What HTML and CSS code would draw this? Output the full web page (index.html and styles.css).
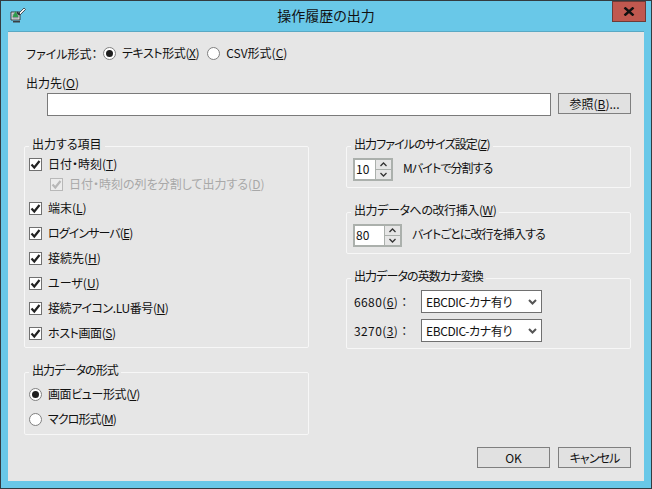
FILE: index.html
```html
<!DOCTYPE html>
<html lang="ja">
<head>
    <meta charset="UTF-8">
    <title>操作履歴の出力</title>
    <link rel="stylesheet" href="styles.css">
</head>
<body>
    <div class="window">
        <div class="titlebar">
            <svg class="app-icon" width="16" height="16" viewBox="0 0 16 16">
                <path d="M1 5h9v8H1z" fill="#e8e8e8" stroke="#3a3f42"/>
                <path d="M2.500 6.500h6v5h-6z" fill="#8d9499"/>
                <path d="M3 14h7v1.500H3z" fill="#3a3f42"/>
                <path d="M5.500 4l3 6H2.500z" fill="#2f9e4c"/>
                <path d="M9 6l5-5 1.500 1.500-5 5z" fill="#f4f4f4" stroke="#2c3135" stroke-width=".8"/>
                <path d="M7.500 4.500l3 3-1.500 1-2.500-2.500z" fill="#2c3135"/>
            </svg>
            <div class="title">操作履歴の出力</div>
            <div class="close">
                <svg width="12" height="9" viewBox="0 0 12 9"><path d="M1.500 .5l9 8M10.500 .5l-9 8" stroke="#111" stroke-width="2.400"/></svg>
            </div>
        </div>

        <div class="client">
            <div class="format-row">
                <span class="format-label">ファイル形式：</span>
                <label class="option"><span class="radio on"></span><span class="snug">テキスト形式(<u>X</u>)</span></label>
                <label class="option"><span class="radio"></span><span>CSV形式(<u>C</u>)</span></label>
            </div>

            <div class="dest-label">出力先(<u>O</u>)</div>
            <div class="dest-row">
                <div class="textbox"></div>
                <button class="btn btn-browse">参照(<u>B</u>)...</button>
            </div>

            <div class="columns">
                <div class="column">
                    <fieldset class="group group-items">
                        <legend>出力する項目</legend>
                        <div class="date-rows">
                            <label class="option">
                                <span class="check"><svg width="11" height="11" viewBox="0 0 11 11"><path d="M1.500 5.500l2.800 3L9.500 2" fill="none" stroke="#222" stroke-width="2.200"/></svg></span>
                                <span>日付・時刻(<u>T</u>)</span>
                            </label>
                            <label class="option sub-option">
                                <span class="check"><svg width="11" height="11" viewBox="0 0 11 11"><path d="M1.500 5.500l2.800 3L9.500 2" fill="none" stroke="#b8b8b8" stroke-width="2.200"/></svg></span>
                                <span>日付・時刻の列を分割して出力する(<u>D</u>)</span>
                            </label>
                        </div>
                        <label class="option">
                            <span class="check"><svg width="11" height="11" viewBox="0 0 11 11"><path d="M1.500 5.500l2.800 3L9.500 2" fill="none" stroke="#222" stroke-width="2.200"/></svg></span>
                            <span>端末(<u>L</u>)</span>
                        </label>
                        <label class="option">
                            <span class="check"><svg width="11" height="11" viewBox="0 0 11 11"><path d="M1.500 5.500l2.800 3L9.500 2" fill="none" stroke="#222" stroke-width="2.200"/></svg></span>
                            <span class="tight">ログインサーバ(<u>E</u>)</span>
                        </label>
                        <label class="option">
                            <span class="check"><svg width="11" height="11" viewBox="0 0 11 11"><path d="M1.500 5.500l2.800 3L9.500 2" fill="none" stroke="#222" stroke-width="2.200"/></svg></span>
                            <span>接続先(<u>H</u>)</span>
                        </label>
                        <label class="option">
                            <span class="check"><svg width="11" height="11" viewBox="0 0 11 11"><path d="M1.500 5.500l2.800 3L9.500 2" fill="none" stroke="#222" stroke-width="2.200"/></svg></span>
                            <span>ユーザ(<u>U</u>)</span>
                        </label>
                        <label class="option">
                            <span class="check"><svg width="11" height="11" viewBox="0 0 11 11"><path d="M1.500 5.500l2.800 3L9.500 2" fill="none" stroke="#222" stroke-width="2.200"/></svg></span>
                            <span class="snug">接続アイコン.LU番号(<u>N</u>)</span>
                        </label>
                        <label class="option">
                            <span class="check"><svg width="11" height="11" viewBox="0 0 11 11"><path d="M1.500 5.500l2.800 3L9.500 2" fill="none" stroke="#222" stroke-width="2.200"/></svg></span>
                            <span class="snug">ホスト画面(<u>S</u>)</span>
                        </label>
                    </fieldset>

                    <fieldset class="group group-format">
                        <legend class="tight">出力データの形式</legend>
                        <label class="option"><span class="radio on"></span><span class="snug">画面ビュー形式(<u>V</u>)</span></label>
                        <label class="option"><span class="radio"></span><span class="tight">マクロ形式(<u>M</u>)</span></label>
                    </fieldset>
                </div>

                <div class="column">
                    <fieldset class="group group-size">
                        <legend class="tight">出力ファイルのサイズ設定(<u>Z</u>)</legend>
                        <div class="spin-row">
                            <div class="spin spin-small">
                                <div class="spin-value">10</div>
                                <div class="spin-buttons">
                                    <div class="spin-btn"><svg width="7" height="5" viewBox="0 0 7 5"><path d="M.5 4l3-3 3 3" fill="none" stroke="#333" stroke-width="1.300"/></svg></div>
                                    <div class="spin-btn"><svg width="7" height="5" viewBox="0 0 7 5"><path d="M.5 1l3 3 3-3" fill="none" stroke="#333" stroke-width="1.300"/></svg></div>
                                </div>
                            </div>
                            <span class="tight">Mバイトで分割する</span>
                        </div>
                    </fieldset>

                    <fieldset class="group group-size">
                        <legend class="snug">出力データへの改行挿入(<u>W</u>)</legend>
                        <div class="spin-row">
                            <div class="spin spin-large">
                                <div class="spin-value">80</div>
                                <div class="spin-buttons">
                                    <div class="spin-btn"><svg width="7" height="5" viewBox="0 0 7 5"><path d="M.5 4l3-3 3 3" fill="none" stroke="#333" stroke-width="1.300"/></svg></div>
                                    <div class="spin-btn"><svg width="7" height="5" viewBox="0 0 7 5"><path d="M.5 1l3 3 3-3" fill="none" stroke="#333" stroke-width="1.300"/></svg></div>
                                </div>
                            </div>
                            <span class="tight">バイトごとに改行を挿入する</span>
                        </div>
                    </fieldset>

                    <fieldset class="group group-kana">
                        <legend class="tight">出力データの英数カナ変換</legend>
                        <div class="combo-row">
                            <span class="combo-label">6680(<u>6</u>) ：</span>
                            <div class="combo">
                                <span class="snug">EBCDIC-カナ有り</span>
                                <svg width="9" height="6" viewBox="0 0 9 6"><path d="M1 1l3.500 3.500L8 1" fill="none" stroke="#555" stroke-width="2"/></svg>
                            </div>
                        </div>
                        <div class="combo-row">
                            <span class="combo-label">3270(<u>3</u>) ：</span>
                            <div class="combo">
                                <span class="snug">EBCDIC-カナ有り</span>
                                <svg width="9" height="6" viewBox="0 0 9 6"><path d="M1 1l3.500 3.500L8 1" fill="none" stroke="#555" stroke-width="2"/></svg>
                            </div>
                        </div>
                    </fieldset>
                </div>
            </div>

            <div class="footer">
                <button class="btn">OK</button>
                <button class="btn tight">キャンセル</button>
            </div>
        </div>
    </div>
</body>
</html>
```

FILE: styles.css
```css
* {
    margin: 0;
    padding: 0;
    box-sizing: border-box;
}

body {
    font-family: "Noto Sans CJK JP", "Noto Sans", sans-serif;
    font-size: 12px;
    font-feature-settings: "palt";
    color: #111;
    overflow: hidden;
}

.window {
    width: 652px;
    height: 489px;
    background: #69c8e8;
    border: 1px solid #333b40;
    padding: 0 7px 7px;
    display: flex;
    flex-direction: column;
}

.titlebar {
    height: 30px;
    flex: none;
    display: grid;
    grid-template-columns: 1fr auto 1fr;
    align-items: start;
}

.app-icon {
    margin: 6px 0 0 2px;
}

.title {
    font-size: 14px;
    line-height: 20px;
    margin-top: 4px;
}

.close {
    justify-self: end;
    width: 34px;
    height: 21px;
    margin-right: -2px;
    background: #c0584f;
    border: 1px solid #6e3b37;
    display: flex;
    align-items: center;
    justify-content: center;
}

.client {
    flex: 1;
    background: #e6e6e6;
    border-top: 1px solid #5aa9c4;
    padding: 11px 13px 13px 16px;
    display: flex;
    flex-direction: column;
}

u {
    text-underline-offset: 1px;
}

.snug {
    letter-spacing: -0.4px;
}

.tight {
    letter-spacing: -0.9px;
}

.option {
    display: flex;
    align-items: center;
    height: 16px;
    line-height: 16px;
}

.format-row {
    display: flex;
    align-items: center;
    height: 20px;
    padding-left: 2px;
}

.format-label {
    width: 77px;
}

.format-row .option + .option {
    margin-left: 8px;
}

.radio {
    flex: none;
    width: 13px;
    height: 13px;
    margin-right: 6px;
    border: 1px solid #808080;
    border-radius: 50%;
    background: #fff;
    display: flex;
    align-items: center;
    justify-content: center;
}

.radio.on::after {
    content: "";
    width: 7px;
    height: 7px;
    border-radius: 50%;
    background: #1e1e1e;
}

.check {
    flex: none;
    width: 13px;
    height: 13px;
    margin-right: 6px;
    border: 1px solid #707070;
    background: #fff;
}

.check svg {
    display: block;
}

.dest-label {
    height: 18px;
    line-height: 16px;
    margin-top: 12px;
    padding-left: 2px;
}

.dest-row {
    display: flex;
    align-items: flex-start;
    gap: 7px;
    padding-left: 23px;
}

.textbox {
    width: 504px;
    height: 23px;
    background: #fff;
    border: 1px solid #7a7a7a;
}

.btn {
    width: 73px;
    height: 21px;
    background: #e1e1e1;
    border: 1px solid #7f7f7f;
    font: inherit;
    font-feature-settings: inherit;
    color: inherit;
}

.columns {
    display: grid;
    grid-template-columns: 285px 285px;
    column-gap: 37px;
    margin-top: 21px;
}

.column {
    display: flex;
    flex-direction: column;
}

.group {
    border: 1px solid #f7f7f7;
    border-radius: 2px;
    padding: 0 4px;
    display: flex;
    flex-direction: column;
    min-width: 0;
}

.group legend {
    padding: 0 3px 4px;
    height: 18px;
    line-height: 14px;
}

.group-items {
    gap: 9px;
    padding-top: 1px;
    padding-bottom: 6px;
}

.date-rows {
    display: flex;
    flex-direction: column;
    gap: 4px;
    margin-bottom: -1px;
}

.sub-option {
    color: #a8a8a8;
    padding-left: 21px;
}

.sub-option .check {
    border-color: #b8b8b8;
    background: #ececec;
}

.group-format {
    margin-top: 15px;
    gap: 9px;
    padding-top: 5px;
    padding-bottom: 7px;
}

.group-size {
    margin-bottom: 15px;
    padding-left: 6px;
    padding-bottom: 6px;
}

.group-size legend {
    margin-left: -2px;
}

.spin-row {
    display: flex;
    align-items: center;
    gap: 10px;
    margin-top: 3px;
}

.spin-row > span {
    margin-bottom: 4px;
}

.spin {
    display: flex;
    height: 23px;
    background: #fff;
    border: 2px solid #abb0ac;
}

.spin-small {
    width: 40px;
}

.spin-large {
    width: 49px;
}

.spin-value {
    flex: 1;
    line-height: 18px;
    padding-left: 1px;
}

.spin-buttons {
    width: 16px;
    display: flex;
    flex-direction: column;
    gap: 1px;
    background: #abb0ac;
    border-left: 1px solid #abb0ac;
}

.spin-btn {
    flex: 1;
    background: #e6e6e6;
    display: flex;
    align-items: center;
    justify-content: center;
}

.group-kana {
    gap: 6px;
    padding-left: 7px;
    padding-top: 3px;
    padding-bottom: 6px;
}

.group-kana legend {
    margin-left: -3px;
}

.combo-row {
    display: flex;
    align-items: center;
}

.combo-label {
    width: 67px;
    letter-spacing: 0.4px;
}

.combo {
    width: 121px;
    height: 23px;
    background: #fff;
    border: 1px solid #707070;
    padding: 0 4px;
    display: flex;
    align-items: center;
    justify-content: space-between;
}

.footer {
    margin-top: auto;
    display: flex;
    justify-content: flex-end;
    gap: 8px;
}
```
